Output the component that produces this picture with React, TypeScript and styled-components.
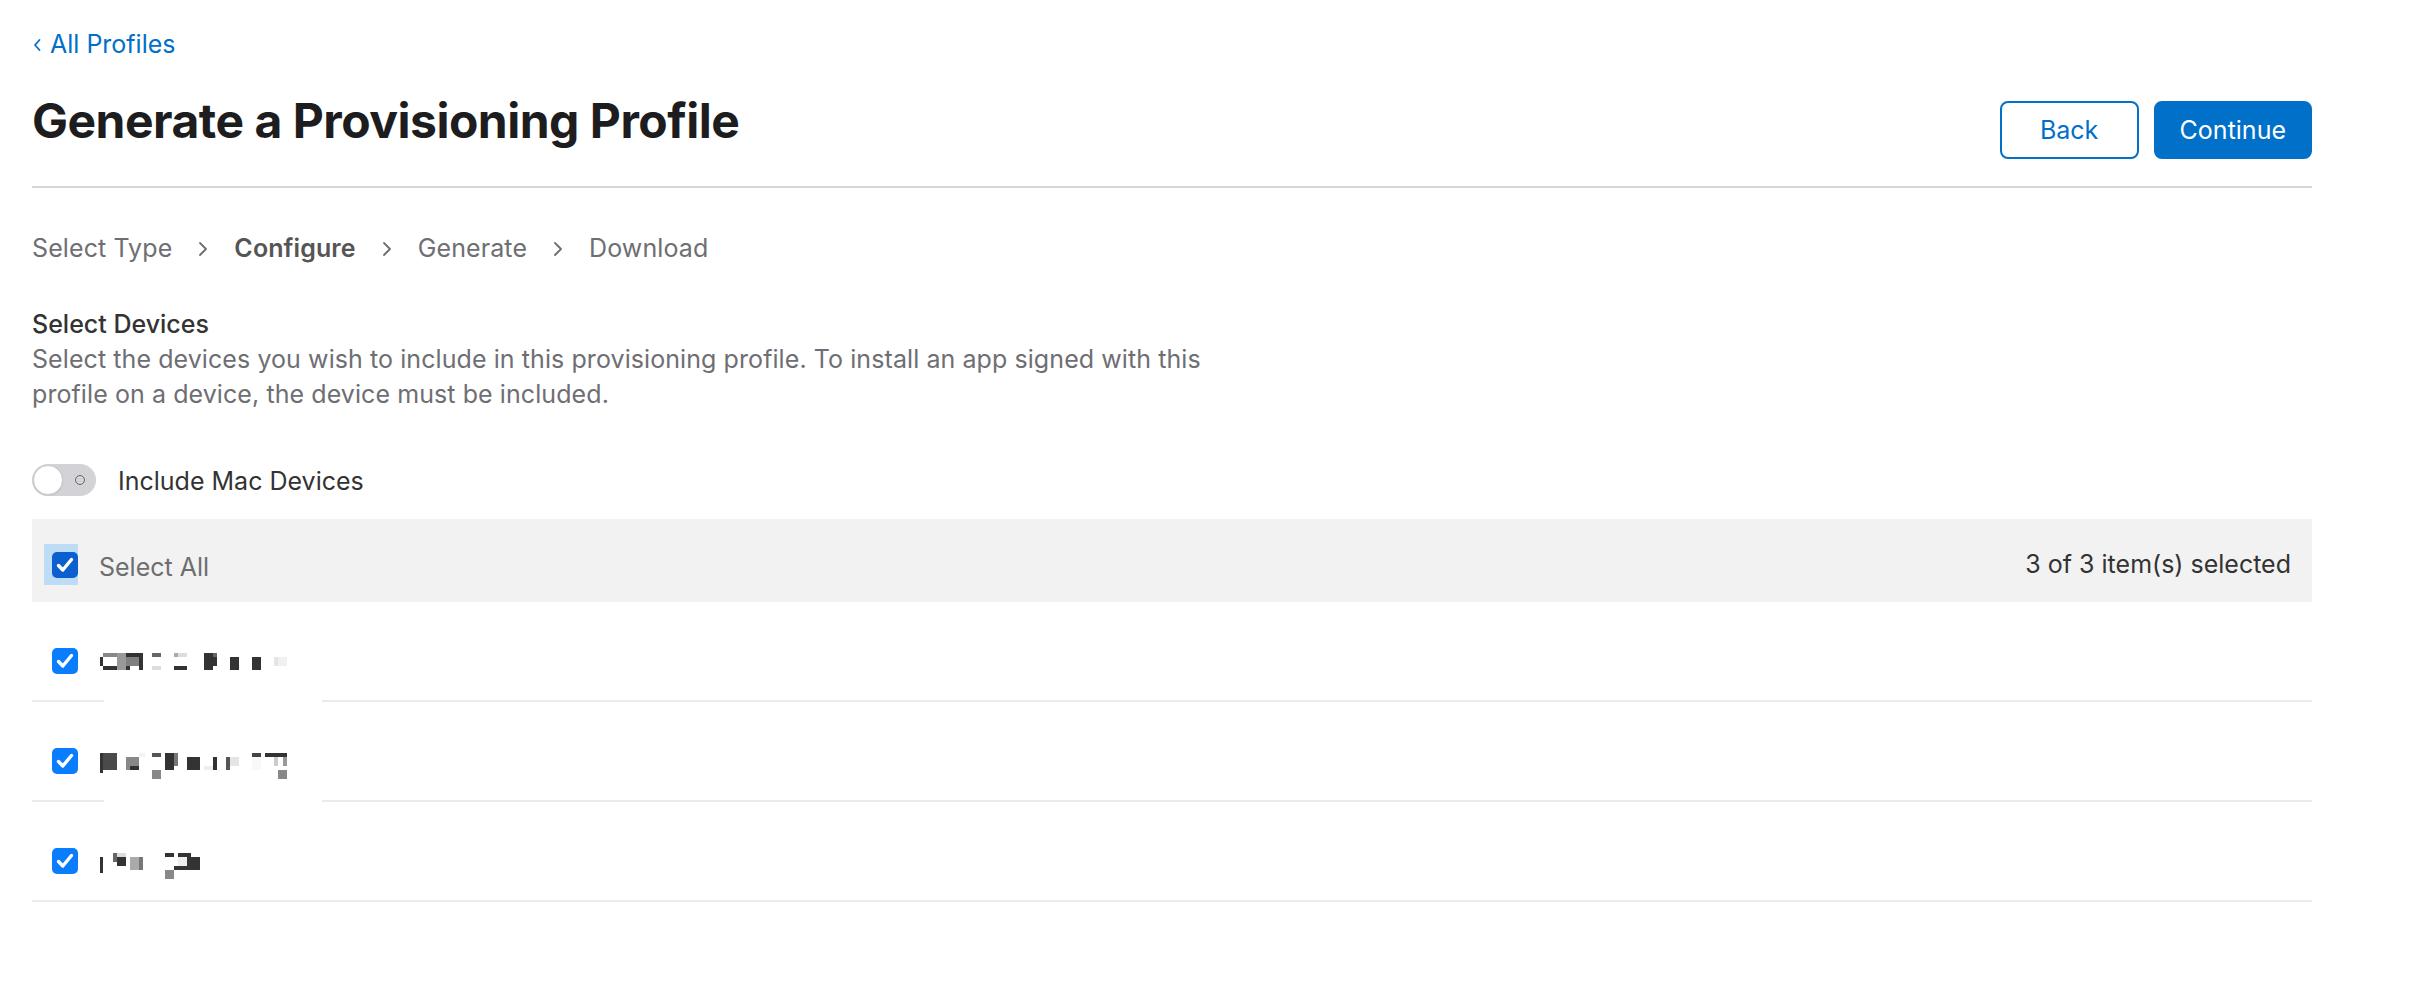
import styled, { createGlobalStyle } from 'styled-components'

const GlobalStyle = createGlobalStyle`
  * { box-sizing: border-box; }
  body {
    margin: 0;
    background: #fff;
    font-family: Inter, "Noto Sans", "Liberation Sans", sans-serif;
    -webkit-font-smoothing: antialiased;
  }
`

type Block = [number, number, number, number, string]

// pixelated (redacted) device names, drawn as mosaics
const devices: { blocks: Block[]; covered: boolean }[] = [
  {
    covered: true,
    blocks: [
      [0, 4, 3, 9, '#333'],
      [3, 0, 14, 4, '#888'],
      [3, 13, 14, 4, '#333'],
      [17, 0, 9, 17, '#999'],
      [26, 0, 17, 4, '#333'],
      [26, 4, 13, 9, '#808080'],
      [39, 4, 4, 13, '#333'],
      [26, 13, 4, 4, '#333'],
      [52, 0, 9, 4, '#666'],
      [52, 13, 9, 4, '#ddd'],
      [74, 0, 4, 4, '#aaa'],
      [78, 0, 9, 4, '#ddd'],
      [74, 13, 13, 4, '#333'],
      [104, 0, 9, 17, '#333'],
      [113, 0, 4, 4, '#666'],
      [113, 4, 4, 9, '#333'],
      [130, 4, 9, 13, '#333'],
      [152, 4, 9, 13, '#333'],
      [174, 4, 4, 9, '#e5e5e5'],
      [178, 4, 9, 9, '#f0f0f0'],
    ],
  },
  {
    covered: true,
    blocks: [
      [0, 0, 3, 20, '#333'],
      [3, 0, 14, 17, '#4a4a4a'],
      [26, 4, 4, 13, '#888'],
      [30, 4, 9, 9, '#888'],
      [30, 13, 9, 4, '#333'],
      [39, 0, 6, 4, '#f3f3f3'],
      [52, 0, 9, 4, '#555'],
      [52, 17, 9, 9, '#888'],
      [65, 0, 9, 17, '#333'],
      [74, 0, 4, 13, '#777'],
      [87, 4, 13, 13, '#333'],
      [104, 13, 9, 4, '#eee'],
      [113, 4, 4, 13, '#333'],
      [126, 4, 4, 13, '#555'],
      [130, 4, 9, 9, '#e5e5e5'],
      [152, 0, 9, 4, '#444'],
      [152, 4, 9, 13, '#f8f8f8'],
      [165, 0, 22, 4, '#333'],
      [174, 4, 4, 9, '#ccc'],
      [183, 4, 4, 9, '#999'],
      [178, 17, 9, 9, '#888'],
    ],
  },
  {
    covered: false,
    blocks: [
      [0, 4, 3, 16, '#333'],
      [13, 0, 4, 9, '#666'],
      [17, 0, 9, 4, '#ddd'],
      [17, 4, 9, 9, '#333'],
      [30, 4, 9, 13, '#aaa'],
      [39, 4, 4, 13, '#777'],
      [65, 0, 9, 4, '#333'],
      [65, 17, 9, 9, '#888'],
      [78, 0, 13, 4, '#333'],
      [78, 4, 9, 9, '#eee'],
      [87, 4, 13, 13, '#333'],
      [74, 13, 13, 4, '#333'],
    ],
  },
]

const Chevron = () => (
  <svg width="10" height="16" viewBox="0 0 10 16">
    <path d="M2 2 L8 8 L2 14" fill="none" stroke="#6e6e73" strokeWidth="1.8" strokeLinecap="round" strokeLinejoin="round" />
  </svg>
)

const Check = ({ dark }: { dark?: boolean }) => (
  <CheckBox $dark={dark}>
    <svg width="26" height="26" viewBox="0 0 26 26">
      <path d="M6.5 13.5 L10.8 18 L19.5 7.5" fill="none" stroke="#fff" strokeWidth="3.4" strokeLinecap="round" strokeLinejoin="round" />
    </svg>
  </CheckBox>
)

const App = () => {
  return (
    <Page>
      <GlobalStyle />
      <BackLink>
        <svg width="10" height="16" viewBox="0 0 10 16">
          <path d="M7.5 3 L3 8 L7.5 13" fill="none" stroke="#0070c9" strokeWidth="1.8" strokeLinecap="round" strokeLinejoin="round" />
        </svg>
        All Profiles
      </BackLink>

      <Header>
        <Title>Generate a Provisioning Profile</Title>
        <Actions>
          <Button>Back</Button>
          <Button $primary>Continue</Button>
        </Actions>
      </Header>
      <Rule />

      <Steps>
        <Step>Select Type</Step>
        <Chevron />
        <Step $current>Configure</Step>
        <Chevron />
        <Step>Generate</Step>
        <Chevron />
        <Step>Download</Step>
      </Steps>

      <SectionTitle>Select Devices</SectionTitle>
      <Description>
        Select the devices you wish to include in this provisioning profile. To install an app signed with this
        profile on a device, the device must be included.
      </Description>

      <ToggleRow>
        <Toggle>
          <Knob />
          <OffMark />
        </Toggle>
        <ToggleLabel>Include Mac Devices</ToggleLabel>
      </ToggleRow>

      <ListHeader>
        <SelectAll>
          <Focus>
            <Check dark />
          </Focus>
          <SelectAllLabel>Select All</SelectAllLabel>
        </SelectAll>
        <Count>3 of 3 item(s) selected</Count>
      </ListHeader>

      {devices.map((d, i) => (
        <Row key={i}>
          <Check />
          <Mosaic width="200" height="28" viewBox="0 0 200 28">
            {d.blocks.map(([x, y, w, h, c], j) => (
              <rect key={j} x={x} y={y} width={w} height={h} fill={c} />
            ))}
          </Mosaic>
          {d.covered && <Cover />}
        </Row>
      ))}
    </Page>
  )
}

const Page = styled.div`
  width: 2312px;
  padding: 27px 0 0 32px;
`
const BackLink = styled.a`
  display: inline-flex;
  align-items: center;
  gap: 8px;
  height: 35px;
  font-size: 25px;
  line-height: 35px;
  color: #0070c9;
  cursor: pointer;
`
const Header = styled.div`
  display: flex;
  justify-content: space-between;
  align-items: flex-start;
  margin-top: 30px;
`
const Title = styled.h1`
  margin: 0;
  font-size: 48px;
  line-height: 58px;
  font-weight: 700;
  color: #1d1d1f;
  letter-spacing: -0.5px;
`
const Actions = styled.div`
  display: flex;
  gap: 15px;
  padding-top: 9px;
`
const Button = styled.button<{ $primary?: boolean }>`
  height: 58px;
  min-width: 139px;
  padding: 0 24px;
  border-radius: 8px;
  font-family: inherit;
  font-size: 25px;
  border: 2px solid #0070c9;
  background: ${p => (p.$primary ? '#0070c9' : '#fff')};
  color: ${p => (p.$primary ? '#fff' : '#0070c9')};
  cursor: pointer;
`
const Rule = styled.div`
  height: 2px;
  background: #d6d6d6;
  margin-top: 27px;
`
const Steps = styled.div`
  display: flex;
  align-items: center;
  gap: 26px;
  margin-top: 43px;
  height: 35px;
`
const Step = styled.span<{ $current?: boolean }>`
  font-size: 25px;
  line-height: 35px;
  letter-spacing: 0.1px;
  font-weight: ${p => (p.$current ? 600 : 400)};
  color: ${p => (p.$current ? '#555' : '#6e6e73')};
`
const SectionTitle = styled.h2`
  margin: 40px 0 0;
  font-size: 25px;
  line-height: 36px;
  font-weight: 500;
  color: #333;
`
const Description = styled.p`
  margin: 0;
  max-width: 1220px;
  font-size: 25px;
  line-height: 35px;
  letter-spacing: 0.08px;
  color: #6e6e73;
`
const ToggleRow = styled.div`
  display: flex;
  align-items: center;
  gap: 22px;
  height: 32px;
  margin-top: 52px;
`
const Toggle = styled.div`
  position: relative;
  width: 64px;
  height: 32px;
  border-radius: 16px;
  background: #d2d2d7;
`
const Knob = styled.div`
  position: absolute;
  left: 1px;
  top: 1px;
  width: 30px;
  height: 30px;
  border-radius: 50%;
  background: #fff;
  border: 1px solid #c9c9cc;
  box-shadow: 0 1px 2px rgba(0, 0, 0, 0.08);
`
const OffMark = styled.div`
  position: absolute;
  right: 11px;
  top: 11px;
  width: 10px;
  height: 10px;
  border-radius: 50%;
  border: 1.5px solid #666;
`
const ToggleLabel = styled.span`
  font-size: 25px;
  line-height: 32px;
  color: #333;
  padding-top: 2px;
`
const ListHeader = styled.div`
  display: flex;
  align-items: center;
  justify-content: space-between;
  height: 83px;
  margin-top: 23px;
  padding: 8px 21px 0 12px;
  background: #f2f2f2;
`
const SelectAll = styled.div`
  display: flex;
  align-items: center;
`
const Focus = styled.div`
  display: flex;
  padding: 8px 0 7px 8px;
  background: #bfdcf7;
`
const SelectAllLabel = styled.span`
  margin-left: 21px;
  padding-top: 6px;
  font-size: 25px;
  line-height: 35px;
  color: #6e6e6e;
`
const Count = styled.span`
  font-size: 25px;
  line-height: 35px;
  color: #333;
`
const CheckBox = styled.div<{ $dark?: boolean }>`
  display: flex;
  width: 26px;
  height: 26px;
  border-radius: 5px;
  background: ${p => (p.$dark ? '#0b5fce' : '#0a7cfe')};
`
const Row = styled.div`
  position: relative;
  display: flex;
  align-items: flex-start;
  height: 100px;
  padding: 46px 0 0 20px;
  border-bottom: 2px solid #ebebeb;
`
const Mosaic = styled.svg`
  margin: 5px 0 0 22px;
`
const Cover = styled.div`
  position: absolute;
  left: 72px;
  bottom: -2px;
  width: 218px;
  height: 10px;
  background: #fff;
`

export default App
